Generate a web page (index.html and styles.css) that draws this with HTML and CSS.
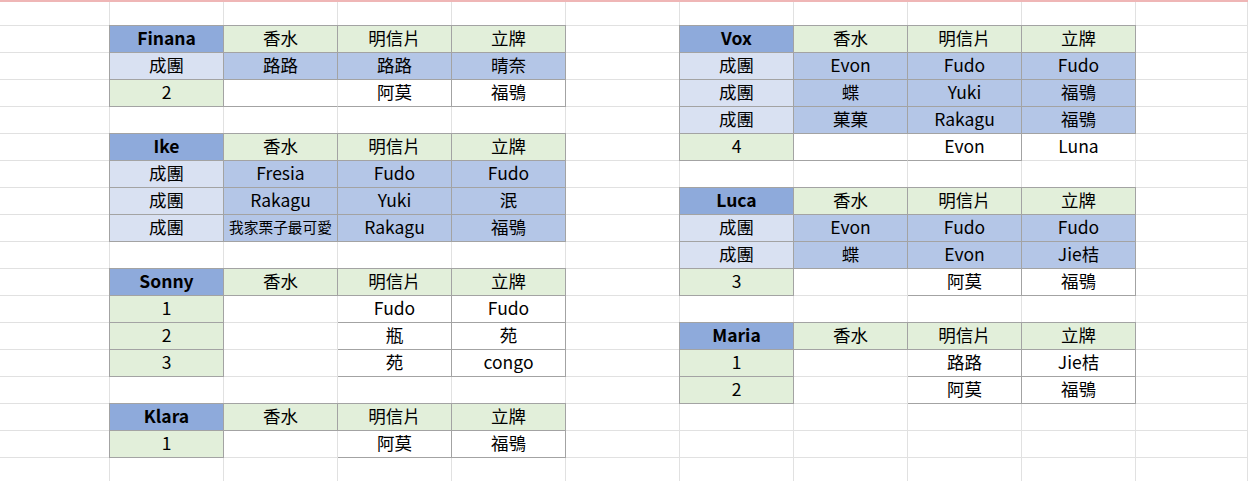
FILE: index.html
```html
<!DOCTYPE html>
<html lang="zh-Hant">
<head>
<meta charset="utf-8">
<title>Sheet</title>
<link rel="stylesheet" href="styles.css">
</head>
<body>
<div class="topline"></div>
<div class="sheet">
  <div class="row first">
    <div class="c"></div><div class="c"></div><div class="c"></div><div class="c"></div><div class="c"></div><div class="c"></div><div class="c"></div><div class="c"></div><div class="c"></div><div class="c"></div><div class="c"></div>
  </div>
  <div class="row">
    <div class="c"></div>
    <div class="c x nm">Finana</div><div class="c x hd">香水</div><div class="c x hd">明信片</div><div class="c x hd">立牌</div>
    <div class="c"></div>
    <div class="c x nm">Vox</div><div class="c x hd">香水</div><div class="c x hd">明信片</div><div class="c x hd">立牌</div>
    <div class="c"></div>
  </div>
  <div class="row">
    <div class="c"></div>
    <div class="c x tm">成團</div><div class="c x bl">路路</div><div class="c x bl">路路</div><div class="c x bl">晴奈</div>
    <div class="c"></div>
    <div class="c x tm">成團</div><div class="c x bl">Evon</div><div class="c x bl">Fudo</div><div class="c x bl">Fudo</div>
    <div class="c"></div>
  </div>
  <div class="row">
    <div class="c"></div>
    <div class="c x gn">2</div><div class="c b"></div><div class="c rb">阿莫</div><div class="c rb">福鴞</div>
    <div class="c"></div>
    <div class="c x tm">成團</div><div class="c x bl">蝶</div><div class="c x bl">Yuki</div><div class="c x bl">福鴞</div>
    <div class="c"></div>
  </div>
  <div class="row">
    <div class="c"></div>
    <div class="c"></div><div class="c"></div><div class="c"></div><div class="c"></div>
    <div class="c"></div>
    <div class="c x tm">成團</div><div class="c x bl">菓菓</div><div class="c x bl">Rakagu</div><div class="c x bl">福鴞</div>
    <div class="c"></div>
  </div>
  <div class="row">
    <div class="c"></div>
    <div class="c x nm">Ike</div><div class="c x hd">香水</div><div class="c x hd">明信片</div><div class="c x hd">立牌</div>
    <div class="c"></div>
    <div class="c x gn">4</div><div class="c b"></div><div class="c rb">Evon</div><div class="c">Luna</div>
    <div class="c"></div>
  </div>
  <div class="row">
    <div class="c"></div>
    <div class="c x tm">成團</div><div class="c x bl">Fresia</div><div class="c x bl">Fudo</div><div class="c x bl">Fudo</div>
    <div class="c"></div>
    <div class="c"></div><div class="c"></div><div class="c"></div><div class="c"></div>
    <div class="c"></div>
  </div>
  <div class="row">
    <div class="c"></div>
    <div class="c x tm">成團</div><div class="c x bl">Rakagu</div><div class="c x bl">Yuki</div><div class="c x bl">泯</div>
    <div class="c"></div>
    <div class="c x nm">Luca</div><div class="c x hd">香水</div><div class="c x hd">明信片</div><div class="c x hd">立牌</div>
    <div class="c"></div>
  </div>
  <div class="row">
    <div class="c"></div>
    <div class="c x tm">成團</div><div class="c x bl small">我家栗子最可愛</div><div class="c x bl">Rakagu</div><div class="c x bl">福鴞</div>
    <div class="c"></div>
    <div class="c x tm">成團</div><div class="c x bl">Evon</div><div class="c x bl">Fudo</div><div class="c x bl">Fudo</div>
    <div class="c"></div>
  </div>
  <div class="row">
    <div class="c"></div>
    <div class="c"></div><div class="c"></div><div class="c"></div><div class="c"></div>
    <div class="c"></div>
    <div class="c x tm">成團</div><div class="c x bl">蝶</div><div class="c x bl">Evon</div><div class="c x bl">Jie桔</div>
    <div class="c"></div>
  </div>
  <div class="row">
    <div class="c"></div>
    <div class="c x nm">Sonny</div><div class="c x hd">香水</div><div class="c x hd">明信片</div><div class="c x hd">立牌</div>
    <div class="c"></div>
    <div class="c x gn">3</div><div class="c"></div><div class="c rb">阿莫</div><div class="c rb">福鴞</div>
    <div class="c"></div>
  </div>
  <div class="row">
    <div class="c"></div>
    <div class="c x gn">1</div><div class="c"></div><div class="c rb">Fudo</div><div class="c rb">Fudo</div>
    <div class="c"></div>
    <div class="c"></div><div class="c"></div><div class="c"></div><div class="c"></div>
    <div class="c"></div>
  </div>
  <div class="row">
    <div class="c"></div>
    <div class="c x gn">2</div><div class="c"></div><div class="c rb">瓶</div><div class="c rb">苑</div>
    <div class="c"></div>
    <div class="c x nm">Maria</div><div class="c x hd">香水</div><div class="c x hd">明信片</div><div class="c x hd">立牌</div>
    <div class="c"></div>
  </div>
  <div class="row">
    <div class="c"></div>
    <div class="c x gn">3</div><div class="c"></div><div class="c rb">苑</div><div class="c rb">congo</div>
    <div class="c"></div>
    <div class="c x gn">1</div><div class="c"></div><div class="c rb">路路</div><div class="c rb">Jie桔</div>
    <div class="c"></div>
  </div>
  <div class="row">
    <div class="c"></div>
    <div class="c"></div><div class="c"></div><div class="c"></div><div class="c"></div>
    <div class="c"></div>
    <div class="c x gn">2</div><div class="c"></div><div class="c rb">阿莫</div><div class="c rb">福鴞</div>
    <div class="c"></div>
  </div>
  <div class="row">
    <div class="c"></div>
    <div class="c x nm">Klara</div><div class="c x hd">香水</div><div class="c x hd">明信片</div><div class="c x hd">立牌</div>
    <div class="c"></div>
    <div class="c"></div><div class="c"></div><div class="c"></div><div class="c"></div>
    <div class="c"></div>
  </div>
  <div class="row">
    <div class="c"></div>
    <div class="c x gn">1</div><div class="c"></div><div class="c rb">阿莫</div><div class="c rb">福鴞</div>
    <div class="c"></div>
    <div class="c"></div><div class="c"></div><div class="c"></div><div class="c"></div>
    <div class="c"></div>
  </div>
  <div class="row">
    <div class="c"></div><div class="c"></div><div class="c"></div><div class="c"></div><div class="c"></div><div class="c"></div><div class="c"></div><div class="c"></div><div class="c"></div><div class="c"></div><div class="c"></div>
  </div>
</div>
</body>
</html>
```

FILE: styles.css
```css
html, body {
  margin: 0;
  padding: 0;
  background: #ffffff;
}

body {
  width: 1248px;
  height: 481px;
  overflow: hidden;
  font-family: "Noto Sans CJK TC", "Noto Sans CJK SC", sans-serif;
  font-size: 17.5px;
  color: #000000;
}

.topline {
  height: 2px;
  background: #efb6b6;
}

.sheet {
  display: flex;
  flex-direction: column;
}

.row {
  display: grid;
  grid-template-columns: 110px repeat(9, 114px) 1fr;
  height: 27px;
}

.row.first {
  height: 24px;
}

.c {
  box-sizing: border-box;
  border-right: 1px solid #e1e1e1;
  border-bottom: 1px solid #e1e1e1;
  display: flex;
  align-items: center;
  justify-content: center;
  white-space: nowrap;
  line-height: 1;
  padding-bottom: 2px;
}

/* fully boxed table cell: own right/bottom + paint neighbour's left/top line */
.x {
  border-right-color: #a3a3a3;
  border-bottom-color: #a3a3a3;
  box-shadow: -1px 0 0 #a3a3a3, 0 -1px 0 #a3a3a3, -1px -1px 0 #a3a3a3;
}

.rb {
  border-right-color: #a3a3a3;
  border-bottom-color: #a3a3a3;
}

.b {
  border-bottom-color: #a3a3a3;
}

.nm {
  background: #8eaadb;
  font-weight: 700;
}

.hd {
  background: #e2efda;
}

.tm {
  background: #d9e1f2;
}

.bl {
  background: #b4c6e7;
}

.gn {
  background: #e2efda;
}

.small {
  font-size: 14.7px;
}
```
